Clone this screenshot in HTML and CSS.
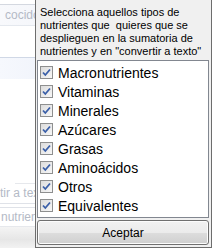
FILE: index.html
```html
<!DOCTYPE html>
<html>
<head>
<title>Tipos de nutrientes</title>
<link rel="stylesheet" href="styles.css">
</head>
<body>
<div class="form-bg">
  <div class="field field-top"><span class="field-label">cocido</span></div>
  <div class="band"></div>
  <div class="spacer"></div>
  <div class="field field-conv"><span class="field-label">tir a texto</span></div>
  <div class="field field-nutr"><span class="field-label">nutrientes</span></div>
  <div class="fade"></div>
</div>

<div class="popup">
  <div class="desc">
    Selecciona aquellos tipos de<br>
    nutrientes que &nbsp;quieres que se<br>
    desplieguen en la sumatoria de<br>
    nutrientes y en "convertir a texto"
  </div>
  <div class="list">
    <label class="item"><span class="chk"><svg viewBox="0 0 11 11" width="11" height="11"><path d="M2 5.5 L4.3 8 L9 2.5" fill="none" stroke="#3a5fa8" stroke-width="1.8"/></svg></span>Macronutrientes</label>
    <label class="item"><span class="chk"><svg viewBox="0 0 11 11" width="11" height="11"><path d="M2 5.5 L4.3 8 L9 2.5" fill="none" stroke="#3a5fa8" stroke-width="1.8"/></svg></span>Vitaminas</label>
    <label class="item"><span class="chk"><svg viewBox="0 0 11 11" width="11" height="11"><path d="M2 5.5 L4.3 8 L9 2.5" fill="none" stroke="#3a5fa8" stroke-width="1.8"/></svg></span>Minerales</label>
    <label class="item"><span class="chk"><svg viewBox="0 0 11 11" width="11" height="11"><path d="M2 5.5 L4.3 8 L9 2.5" fill="none" stroke="#3a5fa8" stroke-width="1.8"/></svg></span>Azúcares</label>
    <label class="item"><span class="chk"><svg viewBox="0 0 11 11" width="11" height="11"><path d="M2 5.5 L4.3 8 L9 2.5" fill="none" stroke="#3a5fa8" stroke-width="1.8"/></svg></span>Grasas</label>
    <label class="item"><span class="chk"><svg viewBox="0 0 11 11" width="11" height="11"><path d="M2 5.5 L4.3 8 L9 2.5" fill="none" stroke="#3a5fa8" stroke-width="1.8"/></svg></span>Aminoácidos</label>
    <label class="item"><span class="chk"><svg viewBox="0 0 11 11" width="11" height="11"><path d="M2 5.5 L4.3 8 L9 2.5" fill="none" stroke="#3a5fa8" stroke-width="1.8"/></svg></span>Otros</label>
    <label class="item"><span class="chk"><svg viewBox="0 0 11 11" width="11" height="11"><path d="M2 5.5 L4.3 8 L9 2.5" fill="none" stroke="#3a5fa8" stroke-width="1.8"/></svg></span>Equivalentes</label>
  </div>
  <button class="ok">Aceptar</button>
</div>
</body>
</html>
```
FILE: styles.css
```css
body {
  margin: 0;
  width: 212px;
  height: 248px;
  overflow: hidden;
  background-color: white;
  font-family: "Liberation Sans", Arial, sans-serif;
  position: relative;
}
.form-bg {
  display: flex;
  flex-direction: column;
}
.field {
  font-size: 12px;
  color: #b4bac6;
  white-space: nowrap;
  overflow: hidden;
}
.field-label {
  display: inline-block;
  overflow: hidden;
  vertical-align: top;
}
.field-top {
  margin-top: 4px;
  height: 20px;
  line-height: 20px;
  padding-left: 5px;
  border-top: 1px solid #d4d8e0;
  border-bottom: 1px solid #e4e8ee;
  background: linear-gradient(to right, #f8f9fc, #e6ebf4);
}
.field-top .field-label {
  width: 30px;
}
.band {
  margin-top: 31px;
  height: 21px;
  border-top: 1px solid #d0d8e6;
  background: linear-gradient(to right, #f6f8fd, #dde6f6);
}
.spacer {
  height: 104px;
  border-bottom: 1px solid #e6e8ec;
  margin-left: 15px;
}
.field-conv {
  height: 19px;
  line-height: 19px;
  border-bottom: 1px solid #dfe2e8;
}
.field-conv .field-label {
  width: 35px;
}
.field-nutr {
  margin-top: 3px;
  height: 18px;
  line-height: 18px;
  padding-left: 1px;
  border-top: 1px solid #dfe2e8;
  border-bottom: 1px solid #e6e8ec;
}
.field-nutr .field-label {
  width: 34px;
}
.fade {
  height: 21px;
  background: linear-gradient(to bottom, #f4f4f4, #e6e6e6 60%, #f2f2f2);
}
.popup {
  position: absolute;
  left: 35px;
  top: -1px;
  width: 177px;
  height: 249px;
  box-sizing: border-box;
  border: 1px solid #6d6d6d;
  background-color: #f0f0f0;
  display: flex;
  flex-direction: column;
  padding: 0 2px 0 1px;
}
.desc {
  padding: 6px 0 0 3px;
  font-size: 11px;
  line-height: 13px;
  color: #000;
  white-space: nowrap;
}
.list {
  margin-top: 2px;
  border: 1px solid #828790;
  background-color: white;
  padding: 2px 0;
  display: flex;
  flex-direction: column;
}
.item {
  display: flex;
  align-items: center;
  height: 19px;
  padding-left: 2px;
  font-size: 14px;
  color: #000;
}
.chk {
  width: 11px;
  height: 11px;
  border: 1px solid #8e8f8f;
  background: linear-gradient(135deg, #dcdcdc, #f7f7f7);
  margin-right: 5px;
  display: flex;
}
.ok {
  margin-top: 2px;
  height: 25px;
  border: 1px solid #707070;
  border-radius: 3px;
  background: linear-gradient(to bottom, #f2f2f2 0%, #ebebeb 50%, #dddddd 50%, #cfcfcf 100%);
  box-shadow: inset 0 0 0 1px #fcfcfc;
  font-family: "Liberation Sans", Arial, sans-serif;
  font-size: 12px;
  color: #000;
  padding: 0;
}
```
